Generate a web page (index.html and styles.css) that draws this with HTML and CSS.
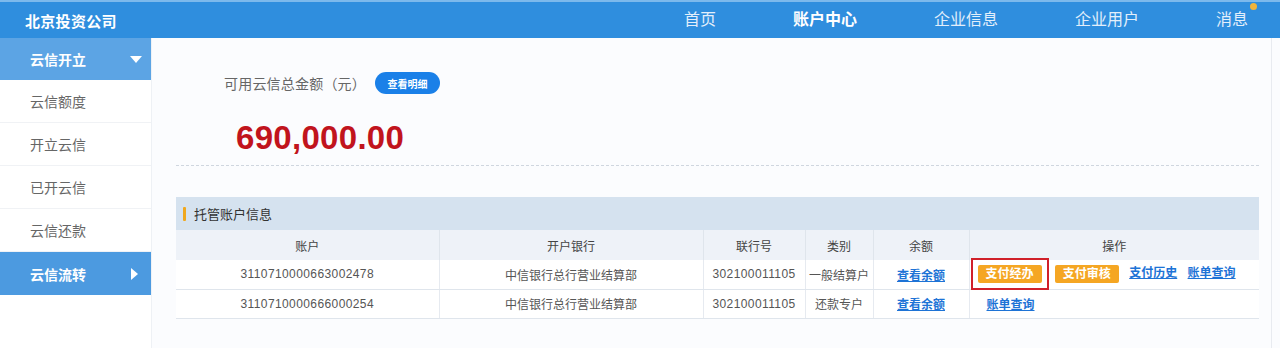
FILE: index.html
```html
<!DOCTYPE html>
<html lang="zh">
<head>
<meta charset="utf-8">
<title>账户中心</title>
<link rel="stylesheet" href="styles.css">
</head>
<body>
<header class="topbar">
  <div class="brand">北京投资公司</div>
  <nav class="nav">
    <a class="nav-item">首页</a>
    <a class="nav-item active">账户中心</a>
    <a class="nav-item">企业信息</a>
    <a class="nav-item">企业用户</a>
    <a class="nav-item msg">消息<span class="dot"></span></a>
  </nav>
</header>
<div class="layout">
  <aside class="sidebar">
    <div class="side-group">云信开立<span class="tri-down"></span></div>
    <div class="side-item">云信额度</div>
    <div class="side-item">开立云信</div>
    <div class="side-item">已开云信</div>
    <div class="side-item">云信还款</div>
    <div class="side-group active">云信流转<span class="tri-right"></span></div>
  </aside>
  <main class="main">
    <div class="card">
      <div class="sum-row">
        <span class="sum-label">可用云信总金额（元）</span>
        <span class="pill">查看明细</span>
      </div>
      <div class="amount">690,000.00</div>
      <div class="divider"></div>
      <div class="section-head"><span class="mark"></span>托管账户信息</div>
      <table class="grid">
        <colgroup>
          <col class="c1"><col class="c2"><col class="c3"><col class="c4"><col class="c5"><col class="c6">
        </colgroup>
        <thead>
          <tr><th>账户</th><th>开户银行</th><th>联行号</th><th>类别</th><th>余额</th><th>操作</th></tr>
        </thead>
        <tbody>
          <tr>
            <td class="num">3110710000663002478</td>
            <td>中信银行总行营业结算部</td>
            <td class="num">302100011105</td>
            <td>一般结算户</td>
            <td><a class="link">查看余额</a></td>
            <td class="ops">
              <span class="hl"><span class="btn">支付经办</span></span>
              <span class="btn">支付审核</span>
              <a class="link">支付历史</a>
              <a class="link">账单查询</a>
            </td>
          </tr>
          <tr>
            <td class="num">3110710000666000254</td>
            <td>中信银行总行营业结算部</td>
            <td class="num">302100011105</td>
            <td>还款专户</td>
            <td><a class="link">查看余额</a></td>
            <td class="ops"><a class="link first">账单查询</a></td>
          </tr>
        </tbody>
      </table>
    </div>
  </main>
</div>
</body>
</html>
```

FILE: styles.css
```css
* { box-sizing: border-box; }
html, body { margin: 0; padding: 0; }
body {
  width: 1280px;
  height: 348px;
  overflow: hidden;
  background: #fbfcfe;
  font-family: "Liberation Sans", "Noto Sans CJK SC", sans-serif;
  color: #555;
}
.topbar {
  height: 38px;
  background: #2f8ede;
  border-top: 2px solid #7cb9ec;
  display: flex;
  align-items: center;
  justify-content: space-between;
  padding: 0 32px 0 25px;
}
.brand {
  color: #fff;
  font-size: 15px;
  font-weight: bold;
  letter-spacing: 0.3px;
}
.nav {
  display: flex;
  gap: 77px;
}
.nav-item {
  color: #e3effb;
  font-size: 16px;
  position: relative;
  line-height: 20px;
}
.nav-item.active { color: #fff; font-weight: bold; }
.dot {
  position: absolute;
  right: -9px;
  top: -7px;
  width: 7px;
  height: 7px;
  border-radius: 50%;
  background: #f0b43c;
}
.layout {
  display: flex;
  height: 310px;
}
.sidebar {
  width: 152px;
  flex: none;
  background: #fff;
  border-right: 1px solid #eef1f5;
}
.side-group {
  height: 42px;
  background: #5ca4e4;
  color: #fff;
  font-size: 14px;
  font-weight: bold;
  display: flex;
  align-items: center;
  justify-content: space-between;
  padding: 0 9px 0 30px;
}
.side-group.active {
  background: #4c9ae0;
  height: 43px;
  padding-right: 13px;
}
.side-item {
  height: 43px;
  border-bottom: 1px solid #f0f2f5;
  font-size: 14px;
  color: #666;
  display: flex;
  align-items: center;
  padding-left: 30px;
}
.tri-down {
  width: 0; height: 0;
  border-left: 6px solid transparent;
  border-right: 6px solid transparent;
  border-top: 7px solid #fff;
}
.tri-right {
  width: 0; height: 0;
  border-top: 6px solid transparent;
  border-bottom: 6px solid transparent;
  border-left: 7px solid #fff;
}
.main {
  flex: 1;
  padding-right: 8px;
}
.card {
  height: 100%;
  border-right: 1px solid #e8ebf0;
  padding: 34px 12px 0 24px;
}
.sum-row {
  display: flex;
  align-items: center;
  height: 22px;
  padding-left: 48px;
}
.sum-label {
  font-size: 14px;
  color: #666;
  letter-spacing: 0.2px;
}
.pill {
  margin-left: 9px;
  width: 65px;
  height: 22px;
  border-radius: 11px;
  background: #1a80e8;
  color: #fff;
  font-size: 10px;
  font-weight: bold;
  display: flex;
  align-items: center;
  justify-content: center;
}
.amount {
  margin-top: 27px;
  padding-left: 60px;
  font-size: 33px;
  line-height: 33px;
  font-weight: bold;
  color: #c1141d;
  letter-spacing: 0.3px;
}
.divider {
  margin-top: 11px;
  border-top: 1px dashed #cfd6df;
}
.section-head {
  margin-top: 31px;
  height: 33px;
  background: #d5e2ef;
  display: flex;
  align-items: center;
  padding-left: 7px;
  font-size: 13px;
  color: #333;
}
.mark {
  width: 3px;
  height: 14px;
  background: #f0a81e;
  margin-right: 8px;
  border-radius: 1px;
}
.grid {
  width: 100%;
  border-collapse: collapse;
  table-layout: fixed;
  font-size: 12px;
}
.c1 { width: 263px; }
.c2 { width: 264px; }
.c3 { width: 102px; }
.c4 { width: 68px; }
.c5 { width: 96px; }
.grid th {
  height: 30px;
  padding: 0;
  background: #eef2f8;
  font-weight: normal;
  color: #444;
  font-size: 12px;
  border-left: 1px solid #dfe5ec;
}
.grid td {
  height: 29px;
  padding: 0;
  text-align: center;
  color: #555;
  border-bottom: 1px solid #dfe5ec;
  border-left: 1px solid #e6eaf0;
  background: #fff;
}
.grid td.num { letter-spacing: 0.4px; }
.grid tr > :first-child { border-left: none; }
.link {
  color: #1d73d6;
  text-decoration: underline;
  font-weight: bold;
  font-size: 12px;
}
.ops {
  text-align: left !important;
  padding-left: 1px !important;
  white-space: nowrap;
}
.ops .link { margin-left: 7px; }
.ops .link.first { margin-left: 16px; }
.hl {
  display: inline-block;
  border: 2px solid #d0202a;
  padding: 5px 5px;
  margin: -5px 0;
  vertical-align: middle;
}
.btn {
  display: inline-block;
  height: 18px;
  line-height: 18px;
  padding: 0 8px;
  background: #f5a623;
  color: #fff;
  font-weight: bold;
  font-size: 12px;
  border-radius: 2px;
  vertical-align: middle;
}
.hl + .btn { margin-left: 3px; }
```
